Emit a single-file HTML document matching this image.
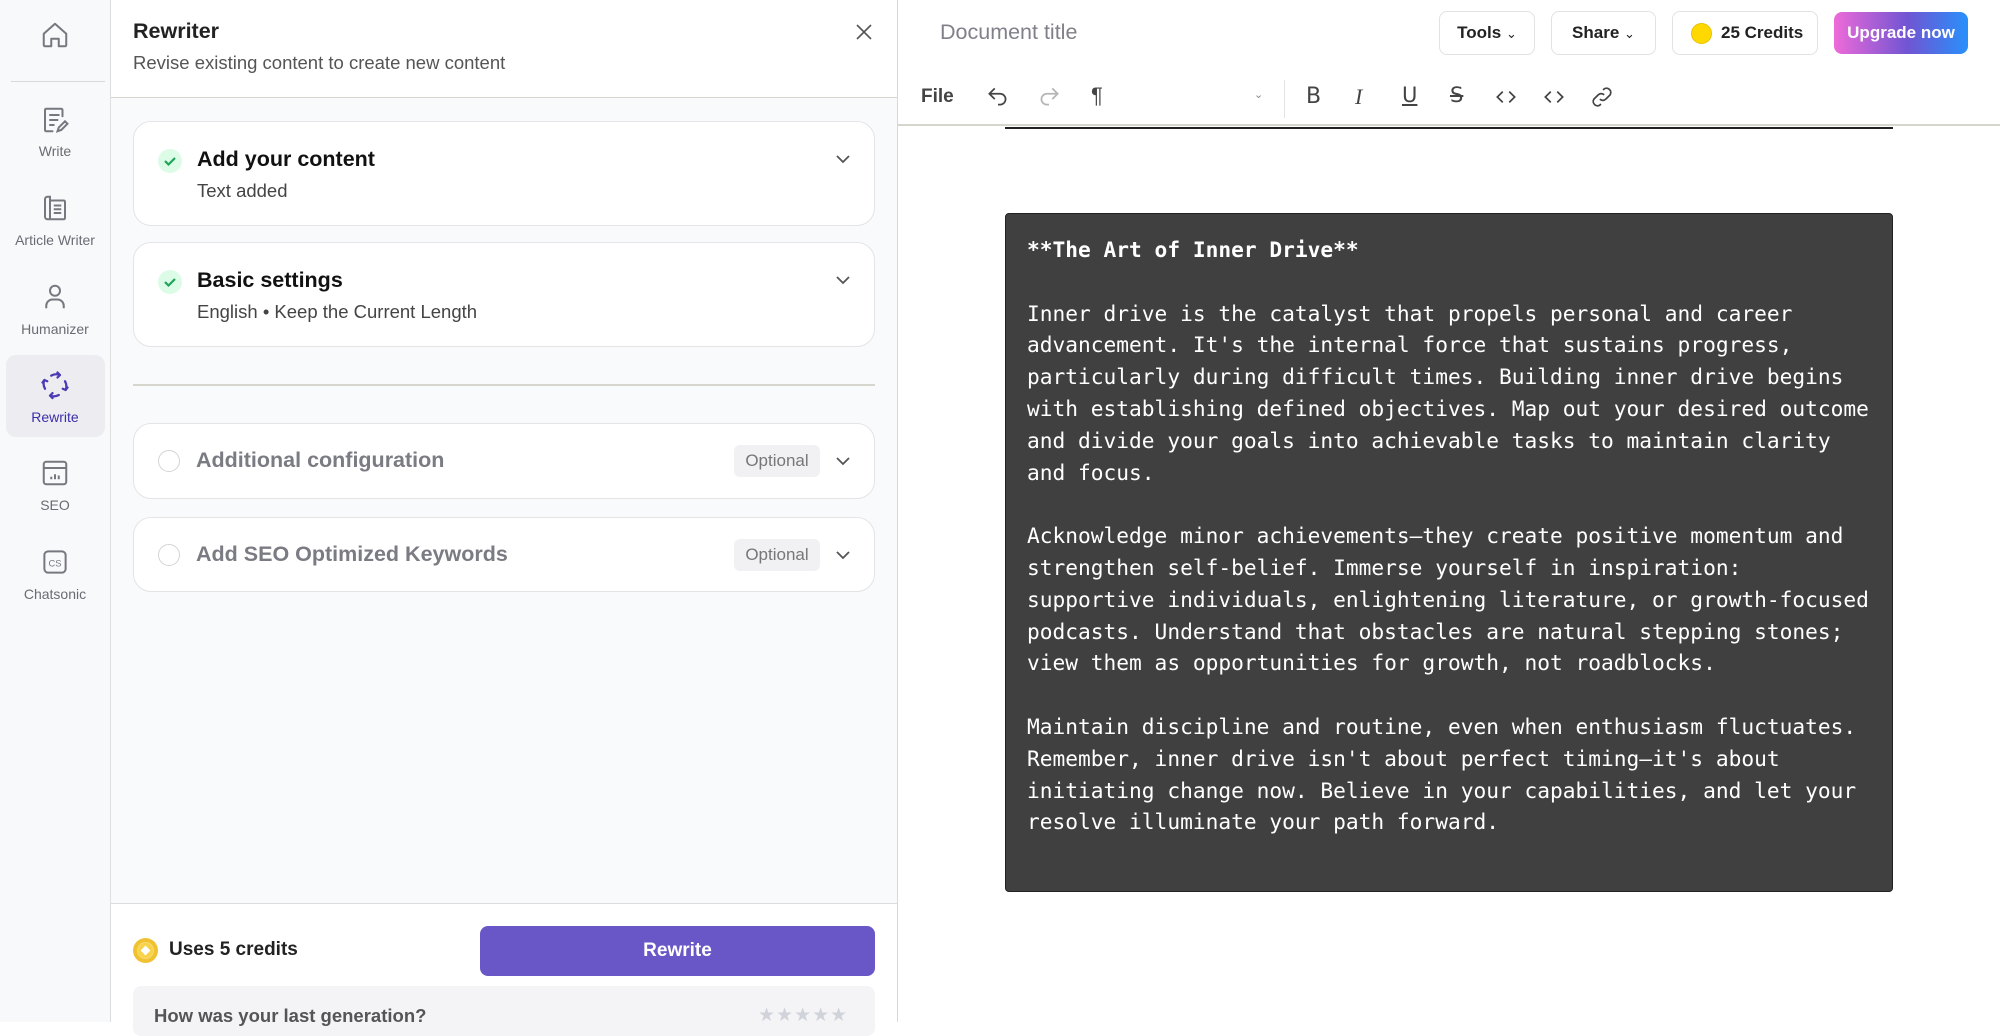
<!DOCTYPE html>
<html><head><meta charset="utf-8"><style>
*{box-sizing:border-box;margin:0;padding:0}
body{width:2000px;height:1022px;overflow:hidden;background:#fff;font-family:"Liberation Sans",sans-serif;position:relative;color:#111}
.a{position:absolute}
.side{left:0;top:0;width:111px;height:1022px;background:#f8f9fb;border-right:1px solid #dedede}
.sl{position:absolute;left:0;width:110px;text-align:center;font-size:14px;color:#6b6b73}
.si{position:absolute;left:40px;width:30px;height:30px}
.panel{left:111px;top:0;width:787px;height:1022px;background:#f9fafb;border-right:1px solid #d9d9d2}
.card{position:absolute;left:22px;width:742px;background:#fff;border:1.5px solid #e4e4e7;border-radius:18px}
.chk{position:absolute;left:24px;width:24px;height:24px;border-radius:50%;background:#dcfce7}
.ct{position:absolute;left:63px;font-size:21.5px;font-weight:bold;color:#111}
.cs{position:absolute;left:63px;font-size:18.5px;color:#444}
.chev{position:absolute;right:22px;width:18px;height:18px}
.opt{position:absolute;right:54px;width:86px;height:32px;background:#f1f1f3;border-radius:6px;font-size:17px;color:#777;text-align:center;line-height:32px}
.rad{position:absolute;left:24px;width:22px;height:22px;border-radius:50%;border:1.5px solid #d4d4d8}
.btn{position:absolute;top:11px;height:44px;border:1.5px solid #e2e2e2;border-radius:8px;font-size:17px;font-weight:bold;color:#222;line-height:41px;text-align:center;white-space:nowrap}
.tb{position:absolute;top:84px;width:26px;height:26px}
pre{font-family:"DejaVu Sans Mono","Liberation Mono",monospace;font-size:21.2px;line-height:31.8px;color:#fff;white-space:pre}
</style></head><body>

<div class="a side">
 <svg class="si" style="top:20px" viewBox="0 0 24 24" fill="none" stroke="#77777f" stroke-width="1.6" stroke-linejoin="round"><path d="M3 11 12 3l9 8v9a1 1 0 0 1-1 1h-5v-6h-6v6H4a1 1 0 0 1-1-1z"/></svg>
 <div class="a" style="left:11px;top:81px;width:94px;height:1px;background:#d9d9d9"></div>
 <svg class="si" style="top:105px" viewBox="0 0 24 24" fill="none" stroke="#77777f" stroke-width="1.6" stroke-linecap="round"><path d="M18 9V4a1 1 0 0 0-1-1H5a1 1 0 0 0-1 1v16a1 1 0 0 0 1 1h5M8 8h7M8 12h6M8 16h3M14 21l1-3 5-5 2 2-5 5z"/></svg>
 <div class="sl" style="top:143px">Write</div>
 <svg class="si" style="top:193px" viewBox="0 0 24 24" fill="none" stroke="#77777f" stroke-width="1.6"><path d="M6 3h2v18H6a2 2 0 0 1-2-2V5a2 2 0 0 1 2-2zM8 6h11a1 1 0 0 1 1 1v13a1 1 0 0 1-1 1H8M11 10h6M11 13h6M11 16h6"/></svg>
 <div class="sl" style="top:232px">Article Writer</div>
 <svg class="si" style="top:282px" viewBox="0 0 24 24" fill="none" stroke="#77777f" stroke-width="1.6"><circle cx="12" cy="7" r="4"/><path d="M5 21v-2a5 5 0 0 1 5-5h4a5 5 0 0 1 5 5v2"/></svg>
 <div class="sl" style="top:321px">Humanizer</div>
 <div class="a" style="left:6px;top:355px;width:99px;height:82px;background:#ececf1;border-radius:10px"></div>
 <svg class="si" style="top:370px" viewBox="0 0 24 24" fill="none" stroke="#4a3bb5" stroke-width="1.8" stroke-linecap="round"><path d="M9 4.5A8 8 0 0 1 16 4M16 4l-2-2M16 4l-2 2M20 9a8 8 0 0 1 .5 7M20.5 16l1.5-2M20.5 16l-2.3-1M15 20a8 8 0 0 1-7 .5M8 20.5l2 2M8 20.5l2-2M4 15a8 8 0 0 1-.5-7M3.5 8l-1.5 2M3.5 8l2.3 1"/></svg>
 <div class="sl" style="top:409px;color:#3d2fa9">Rewrite</div>
 <svg class="si" style="top:458px" viewBox="0 0 24 24" fill="none" stroke="#77777f" stroke-width="1.6"><rect x="3" y="3" width="18" height="18" rx="2"/><path d="M3 8h18M9 17v-2M12 17v-4M15 17v-3"/></svg>
 <div class="sl" style="top:497px">SEO</div>
 <svg class="si" style="top:547px" viewBox="0 0 24 24" fill="none" stroke="#77777f" stroke-width="1.6"><rect x="3.5" y="3.5" width="17" height="17" rx="3"/><text x="12" y="15.5" font-size="7.5" text-anchor="middle" fill="#77777f" stroke="none" font-family="Liberation Sans">CS</text></svg>
 <div class="sl" style="top:586px">Chatsonic</div>
</div>

<div class="a panel">
 <div class="a" style="left:0;top:0;width:786px;height:98px;background:#fff;border-bottom:1.5px solid #d6d6cf"></div>
 <div class="a" style="left:22px;top:19px;font-size:21.5px;font-weight:bold;color:#222">Rewriter</div>
 <div class="a" style="left:22px;top:52px;font-size:18.5px;color:#555">Revise existing content to create new content</div>
 <svg class="a" style="left:743px;top:22px;width:20px;height:20px" viewBox="0 0 20 20" stroke="#555" stroke-width="1.6"><path d="M3 3l14 14M17 3 3 17"/></svg>

 <div class="card" style="top:121px;height:105px">
  <div class="chk" style="top:27px"><svg viewBox="0 0 24 24" width="24" height="24" fill="none" stroke="#22a35a" stroke-width="2.2"><path d="M7 12l3.5 3.5L17 9"/></svg></div>
  <div class="ct" style="top:25px">Add your content</div>
  <div class="cs" style="top:58px">Text added</div>
  <svg class="chev" style="top:28px" viewBox="0 0 18 18" fill="none" stroke="#555" stroke-width="1.8"><path d="M3 6l6 6 6-6"/></svg>
 </div>
 <div class="card" style="top:242px;height:105px">
  <div class="chk" style="top:27px"><svg viewBox="0 0 24 24" width="24" height="24" fill="none" stroke="#22a35a" stroke-width="2.2"><path d="M7 12l3.5 3.5L17 9"/></svg></div>
  <div class="ct" style="top:25px">Basic settings</div>
  <div class="cs" style="top:58px">English • Keep the Current Length</div>
  <svg class="chev" style="top:28px" viewBox="0 0 18 18" fill="none" stroke="#555" stroke-width="1.8"><path d="M3 6l6 6 6-6"/></svg>
 </div>
 <div class="a" style="left:22px;top:384px;width:742px;height:1.5px;background:#d6d6cf"></div>
 <div class="card" style="top:423px;height:76px">
  <div class="rad" style="top:26px"></div>
  <div class="ct" style="left:62px;top:24px;color:#7b7b83">Additional configuration</div>
  <div class="opt" style="top:21px">Optional</div>
  <svg class="chev" style="top:28px" viewBox="0 0 18 18" fill="none" stroke="#555" stroke-width="1.8"><path d="M3 6l6 6 6-6"/></svg>
 </div>
 <div class="card" style="top:517px;height:75px">
  <div class="rad" style="top:26px"></div>
  <div class="ct" style="left:62px;top:24px;color:#7b7b83">Add SEO Optimized Keywords</div>
  <div class="opt" style="top:21px">Optional</div>
  <svg class="chev" style="top:28px" viewBox="0 0 18 18" fill="none" stroke="#555" stroke-width="1.8"><path d="M3 6l6 6 6-6"/></svg>
 </div>

 <div class="a" style="left:0;top:903px;width:786px;height:119px;background:#fff;border-top:1.5px solid #dcdcdc"></div>
 <div class="a" style="left:22px;top:938px;width:25px;height:25px;border-radius:50%;background:#f0c232"><div class="a" style="left:4px;top:4px;width:17px;height:17px;border-radius:50%;background:#f7d24a;border:1.5px solid #fff3"></div><div class="a" style="left:9px;top:9px;width:7px;height:7px;background:#fff;transform:rotate(45deg)"></div></div>
 <div class="a" style="left:58px;top:939px;font-size:19px;font-weight:bold;color:#222">Uses 5 credits</div>
 <div class="a" style="left:369px;top:926px;width:395px;height:50px;background:#6a57c7;border-radius:8px;color:#fff;font-size:19px;font-weight:bold;text-align:center;line-height:50px">Rewrite</div>
 <div class="a" style="left:22px;top:986px;width:742px;height:50px;background:#f4f4f6;border-radius:8px"></div>
 <div class="a" style="left:43px;top:1005px;font-size:18.5px;font-weight:bold;color:#555">How was your last generation?</div>
 <div class="a" style="left:647px;top:1004px;font-size:19px;color:#d0d3d9;letter-spacing:1px">★★★★★</div>
</div>

<!-- right -->
<div class="a" style="left:940px;top:20px;font-size:21.5px;color:#80808a">Document title</div>
<div class="btn" style="left:1439px;width:96px">Tools <span style="font-weight:normal;font-size:13px">&#8964;</span></div>
<div class="btn" style="left:1551px;width:105px">Share <span style="font-weight:normal;font-size:13px">&#8964;</span></div>
<div class="btn" style="left:1672px;width:146px;text-align:left;padding-left:48px"><div class="a" style="left:18px;top:11px;width:21px;height:21px;border-radius:50%;background:#ffd800;border:1px solid #e8c200"></div>25 Credits</div>
<div class="a" style="left:1834px;top:12px;width:134px;height:42px;border-radius:8px;background:linear-gradient(90deg,#ee6ad8,#7055d3 55%,#2890fb);color:#fff;font-size:17px;font-weight:bold;text-align:center;line-height:42px">Upgrade now</div>

<div class="a" style="left:921px;top:86px;font-size:19px;font-weight:bold;color:#444">File</div>
<svg class="tb" style="left:985px" viewBox="0 0 24 24" fill="none" stroke="#444" stroke-width="1.6"><path d="M9 14 4 9l5-5M4 9h10a5 5 0 0 1 0 10h-2"/></svg>
<svg class="tb" style="left:1036px" viewBox="0 0 24 24" fill="none" stroke="#b5b5b5" stroke-width="1.6"><path d="M15 14l5-5-5-5M20 9H10a5 5 0 0 0 0 10h2"/></svg>
<div class="a" style="left:1091px;top:83px;font-size:22px;color:#444">¶</div>
<div class="a" style="left:1254px;top:88px;font-size:11px;color:#888">&#8964;</div>
<div class="a" style="left:1284px;top:80px;width:1px;height:38px;background:#e3e3e3"></div>
<div class="a" style="left:1306px;top:84px;font-size:22px;color:#444;font-family:'DejaVu Sans',sans-serif">B</div>
<div class="a" style="left:1355px;top:84px;font-size:22px;color:#444;font-style:italic;font-family:'Liberation Serif',serif">I</div>
<div class="a" style="left:1402px;top:83px;font-size:21px;color:#444;text-decoration:underline;font-family:'DejaVu Sans',sans-serif">U</div>
<div class="a" style="left:1450px;top:83px;font-size:21px;color:#444;text-decoration:line-through;font-family:'DejaVu Sans',sans-serif">S</div>
<svg class="tb" style="left:1493px" viewBox="0 0 24 24" fill="none" stroke="#444" stroke-width="1.6"><path d="M9 7l-5 5 5 5M15 7l5 5-5 5"/></svg>
<svg class="tb" style="left:1541px" viewBox="0 0 24 24" fill="none" stroke="#444" stroke-width="1.6"><path d="M9 7l-5 5 5 5M15 7l5 5-5 5"/></svg>
<svg class="tb" style="left:1589px" viewBox="0 0 24 24" fill="none" stroke="#444" stroke-width="1.6"><path d="M10 14a4 4 0 0 0 5.5 0l4-4a4 4 0 0 0-5.5-5.5l-1 1M14 10a4 4 0 0 0-5.5 0l-4 4a4 4 0 0 0 5.5 5.5l1-1"/></svg>
<div class="a" style="left:898px;top:124px;width:1102px;height:1.5px;background:#d6d6cf"></div>
<div class="a" style="left:1005px;top:127px;width:888px;height:2px;background:#222"></div>

<div class="a" style="left:1005px;top:213px;width:888px;height:679px;background:#404040;border:1.5px solid #222;border-radius:4px;padding:20px 0 0 21px">
<pre><b>**The Art of Inner Drive**</b>

Inner drive is the catalyst that propels personal and career
advancement. It's the internal force that sustains progress,
particularly during difficult times. Building inner drive begins
with establishing defined objectives. Map out your desired outcome
and divide your goals into achievable tasks to maintain clarity
and focus.

Acknowledge minor achievements—they create positive momentum and
strengthen self-belief. Immerse yourself in inspiration:
supportive individuals, enlightening literature, or growth-focused
podcasts. Understand that obstacles are natural stepping stones;
view them as opportunities for growth, not roadblocks.

Maintain discipline and routine, even when enthusiasm fluctuates.
Remember, inner drive isn't about perfect timing—it's about
initiating change now. Believe in your capabilities, and let your
resolve illuminate your path forward.</pre>
</div>
</body></html>
